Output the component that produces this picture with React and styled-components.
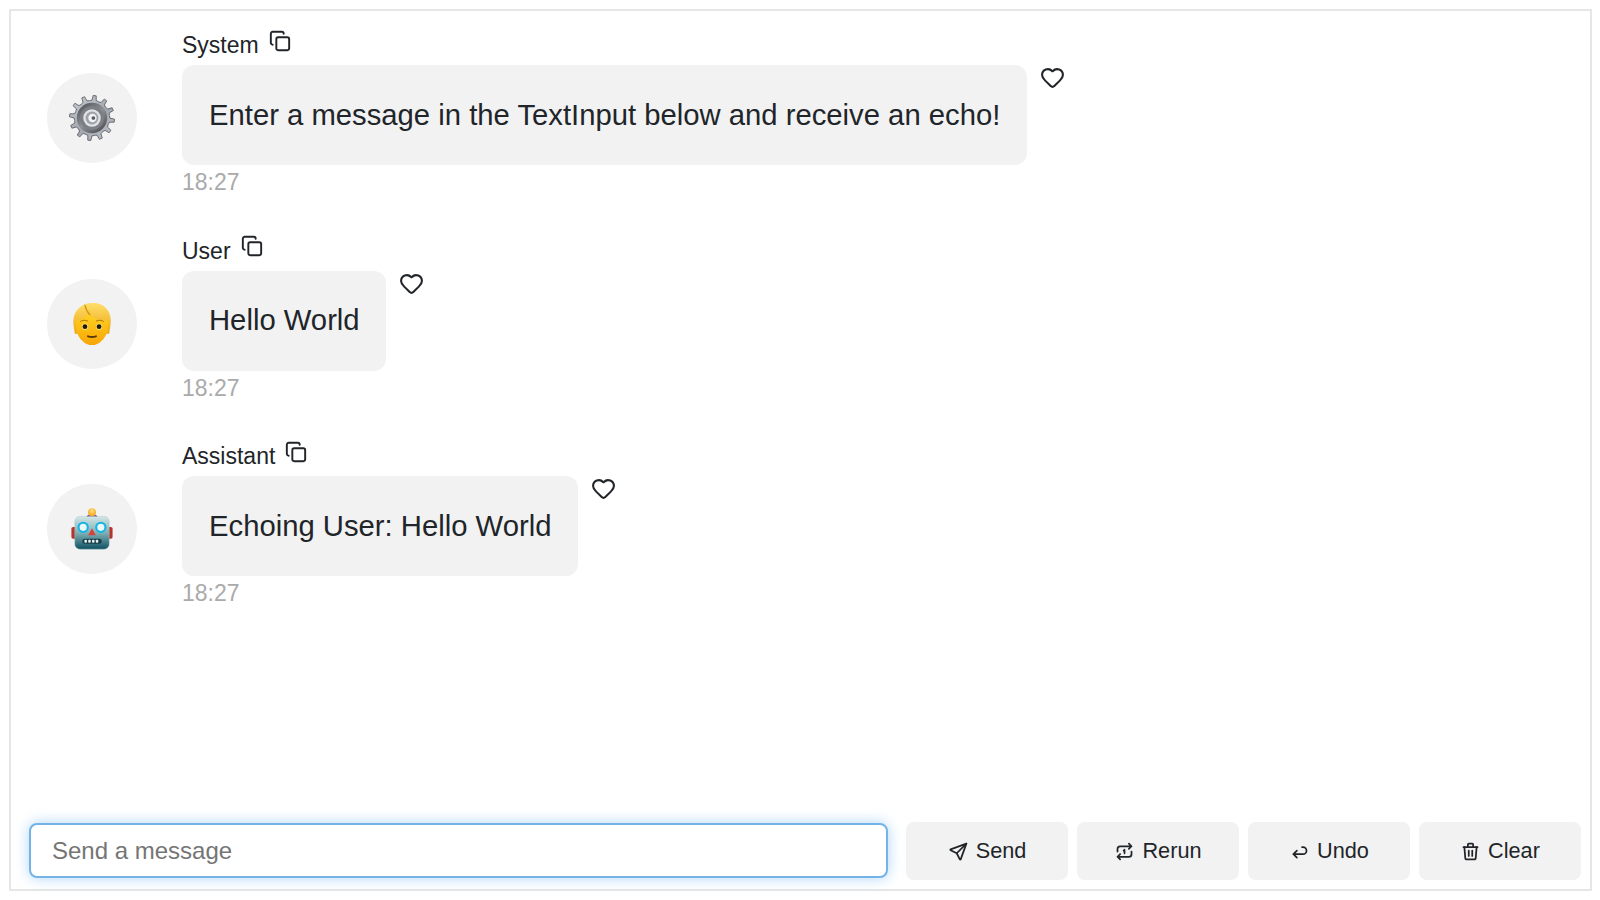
import React from "react";
import styled, { createGlobalStyle } from "styled-components";
import { Copy, Heart } from "lucide-react";
import { TbSend, TbRepeatOnce, TbArrowBack, TbTrash } from "react-icons/tb";

const Global = createGlobalStyle`
  html, body { margin: 0; padding: 0; background: #fff; }
  body { font-family: "Liberation Sans", Arial, sans-serif; color: #212529; }
`;

const Page = styled.div`
  box-sizing: border-box;
  width: 1600px;
  height: 900px;
  padding: 9px;
`;

const Frame = styled.div`
  box-sizing: border-box;
  width: 1583px;
  height: 882px;
  border: 2px solid #e6e6e6;
  display: flex;
  flex-direction: column;
`;

const MessageList = styled.div`
  flex: 1;
  padding-top: 4.5px;
  min-height: 0;
`;

const Row = styled.div`
  display: flex;
  align-items: center;
  height: 205.5px;
  padding-left: 36px;
  gap: 45px;
`;

const Avatar = styled.div`
  flex: none;
  width: 90px;
  height: 90px;
  border-radius: 50%;
  background: #f2f2f2;
  display: flex;
  align-items: center;
  justify-content: center;
`;

const Body = styled.div`
  display: flex;
  flex-direction: column;
  align-self: flex-start;
  padding-top: 9px;
`;

const NameRow = styled.div`
  display: flex;
  align-items: flex-start;
  gap: 10px;
  height: 40.5px;
  font-size: 23px;
  line-height: 26px;
`;

const Name = styled.span`
  padding-top: 7.5px;
`;

const CopyIcon = styled(Copy)`
  margin-top: 5px;
  color: #212529;
`;

const BubbleRow = styled.div`
  display: flex;
  align-items: flex-start;
  gap: 13px;
`;

const Bubble = styled.div`
  box-sizing: border-box;
  height: 100px;
  padding: 0 26.5px 0 27px;
  display: flex;
  align-items: center;
  background: #f2f2f2;
  border-radius: 12px;
  font-size: 29.25px;
  white-space: nowrap;
`;

const HeartIcon = styled(Heart)`
  flex: none;
  color: #212529;
`;

const Time = styled.div`
  margin-top: 4px;
  font-size: 23px;
  line-height: 26px;
  color: #aaaaaa;
`;

const Composer = styled.div`
  display: flex;
  align-items: flex-start;
  gap: 9px;
  padding: 0 8px 9px 18px;
`;

const Input = styled.input`
  box-sizing: border-box;
  width: 859px;
  height: 55px;
  margin: 1px 9px 0 0;
  padding: 0 21px;
  border: 2px solid #74b3e8;
  border-radius: 8px;
  outline: none;
  box-shadow: 0 0 14px rgba(120, 185, 245, 0.6);
  font: 24px "Liberation Sans", Arial, sans-serif;
  color: #212529;
  &::placeholder { color: #757575; opacity: 1; }
`;

const ActionButton = styled.button`
  box-sizing: border-box;
  flex: none;
  width: 162px;
  height: 58px;
  border: none;
  border-radius: 8px;
  background: #f2f2f2;
  color: #212529;
  display: flex;
  align-items: center;
  justify-content: center;
  gap: 7px;
  font: 21.7px "Liberation Sans", Arial, sans-serif;
`;

const Gear = () => {
  const cx = 50, cy = 50;
  const teeth = 12;
  let d = "";
  for (let i = 0; i < teeth; i++) {
    const a = (i / teeth) * Math.PI * 2 + 0.12;
    const s = (Math.PI * 2) / teeth;
    const pts = [
      [a - s * 0.5, 38],
      [a - s * 0.22, 39],
      [a - s * 0.13, 49],
      [a + s * 0.13, 49],
      [a + s * 0.22, 39],
    ];
    pts.forEach(([t, r]) => {
      d += `${d ? "L" : "M"}${(cx + r * Math.cos(t)).toFixed(2)} ${(cy + r * Math.sin(t)).toFixed(2)}`;
    });
  }
  d += "Z";
  return (
    <svg width="46" height="46" viewBox="0 0 100 100" aria-hidden="true">
      <defs>
        <linearGradient id="gearBody" x1="0.1" y1="0" x2="0.9" y2="1">
          <stop offset="0" stopColor="#c9ccd2" />
          <stop offset="0.55" stopColor="#a2a7af" />
          <stop offset="1" stopColor="#bfc3ca" />
        </linearGradient>
        <linearGradient id="gearRing" x1="0.1" y1="0" x2="0.9" y2="1">
          <stop offset="0" stopColor="#4f5156" />
          <stop offset="0.5" stopColor="#8e9196" />
          <stop offset="1" stopColor="#46484c" />
        </linearGradient>
      </defs>
      <path d={d} fill="url(#gearBody)" stroke="#55585d" strokeWidth="1.8" />
      <circle cx="50" cy="50" r="33" fill="url(#gearRing)" />
      <circle cx="50" cy="50" r="26" fill="#7c7f84" />
      <circle cx="50" cy="50" r="19" fill="#dfe2e6" />
      <circle cx="50" cy="50" r="14" fill="#9fa3a9" />
      <circle cx="51" cy="50" r="9" fill="#f2f3f5" />
      <circle cx="53" cy="50" r="4" fill="#55585c" />
    </svg>
  );
};

const Person = () => (
  <svg width="44" height="44" viewBox="0 0 100 100" aria-hidden="true">
    <defs>
      <linearGradient id="hair" x1="0" y1="0" x2="0" y2="1">
        <stop offset="0" stopColor="#ffdf6b" />
        <stop offset="1" stopColor="#eda40f" />
      </linearGradient>
      <linearGradient id="face" x1="0" y1="0" x2="0" y2="1">
        <stop offset="0" stopColor="#ffd21f" />
        <stop offset="1" stopColor="#f7a506" />
      </linearGradient>
    </defs>
    <path d="M8 52C4 20 26 2 52 2c26 0 44 18 40 50l-3 20H11z" fill="url(#hair)" />
    <path d="M15 42c12-1 21-6 27-15 11 11 27 16 43 15 3 6 3 14 1 22-5 19-20 34-36 34S19 83 14 64c-2-8-2-16 1-22z" fill="url(#face)" />
    <path d="M34 7c2 10 5 16 11 22" fill="none" stroke="#d8950f" strokeWidth="3" strokeLinecap="round" />
    <circle cx="34" cy="56" r="7" fill="#ffe680" />
    <circle cx="66" cy="56" r="7" fill="#ffe680" />
    <circle cx="34" cy="56" r="5.5" fill="#241a05" />
    <circle cx="66" cy="56" r="5.5" fill="#241a05" />
    <path d="M24 44c5-3 11-3 16-1M60 43c5-2 11-2 16 1" fill="none" stroke="#b57d10" strokeWidth="2.5" strokeLinecap="round" />
    <path d="M41 78c6 2 12 2 18 0" fill="none" stroke="#5e3a06" strokeWidth="4.5" strokeLinecap="round" />
  </svg>
);

const Robot = () => (
  <svg width="42" height="42" viewBox="0 0 100 100" aria-hidden="true">
    <defs>
      <linearGradient id="head" x1="0" y1="0" x2="0" y2="1">
        <stop offset="0" stopColor="#d4e6e6" />
        <stop offset="0.5" stopColor="#7fb0b5" />
        <stop offset="1" stopColor="#0f5163" />
      </linearGradient>
      <radialGradient id="bulb" cx="0.5" cy="0.35" r="0.7">
        <stop offset="0" stopColor="#ffe27a" />
        <stop offset="1" stopColor="#f59a12" />
      </radialGradient>
    </defs>
    <rect x="1" y="45" width="12" height="28" rx="4" fill="#b5342c" />
    <rect x="87" y="45" width="12" height="28" rx="4" fill="#b5342c" />
    <path d="M37 21c0-7 26-7 26 0v4H37z" fill="#6d4f9c" />
    <circle cx="50" cy="10" r="9.5" fill="url(#bulb)" />
    <rect x="9" y="20" width="82" height="78" rx="12" fill="url(#head)" stroke="#a9c4c4" strokeWidth="1" />
    <circle cx="29" cy="46" r="11" fill="#eef8fa" stroke="#14b5e6" strokeWidth="5" />
    <circle cx="71" cy="46" r="11" fill="#eef8fa" stroke="#14b5e6" strokeWidth="5" />
    <path d="M50 48l9 17H41z" fill="#d8413a" />
    <rect x="27" y="73" width="46" height="12" rx="6" fill="#163f49" />
    <g fill="#e8eeee">
      <rect x="32" y="75.5" width="6" height="7" rx="2" />
      <rect x="41" y="75.5" width="6" height="7" rx="2" />
      <rect x="50" y="75.5" width="6" height="7" rx="2" />
      <rect x="59" y="75.5" width="6" height="7" rx="2" />
    </g>
  </svg>
);

const messages = [
  { who: "System", text: "Enter a message in the TextInput below and receive an echo!", icon: <Gear /> },
  { who: "User", text: "Hello World", icon: <Person /> },
  { who: "Assistant", text: "Echoing User: Hello World", icon: <Robot /> },
];

const actions = [
  { label: "Send", Icon: TbSend },
  { label: "Rerun", Icon: TbRepeatOnce },
  { label: "Undo", Icon: TbArrowBack },
  { label: "Clear", Icon: TbTrash },
];

export default function App() {
  return (
    <Page>
      <Global />
      <Frame>
        <MessageList>
          {messages.map((m) => (
            <Row key={m.who}>
              <Avatar>{m.icon}</Avatar>
              <Body>
                <NameRow>
                  <Name>{m.who}</Name>
                  <CopyIcon size={22} strokeWidth={2.1} />
                </NameRow>
                <BubbleRow>
                  <Bubble>{m.text}</Bubble>
                  <HeartIcon size={25} strokeWidth={2} />
                </BubbleRow>
                <Time>18:27</Time>
              </Body>
            </Row>
          ))}
        </MessageList>
        <Composer>
          <Input placeholder="Send a message" />
          {actions.map(({ label, Icon }) => (
            <ActionButton key={label}>
              <Icon size={21} />
              {label}
            </ActionButton>
          ))}
        </Composer>
      </Frame>
    </Page>
  );
}
